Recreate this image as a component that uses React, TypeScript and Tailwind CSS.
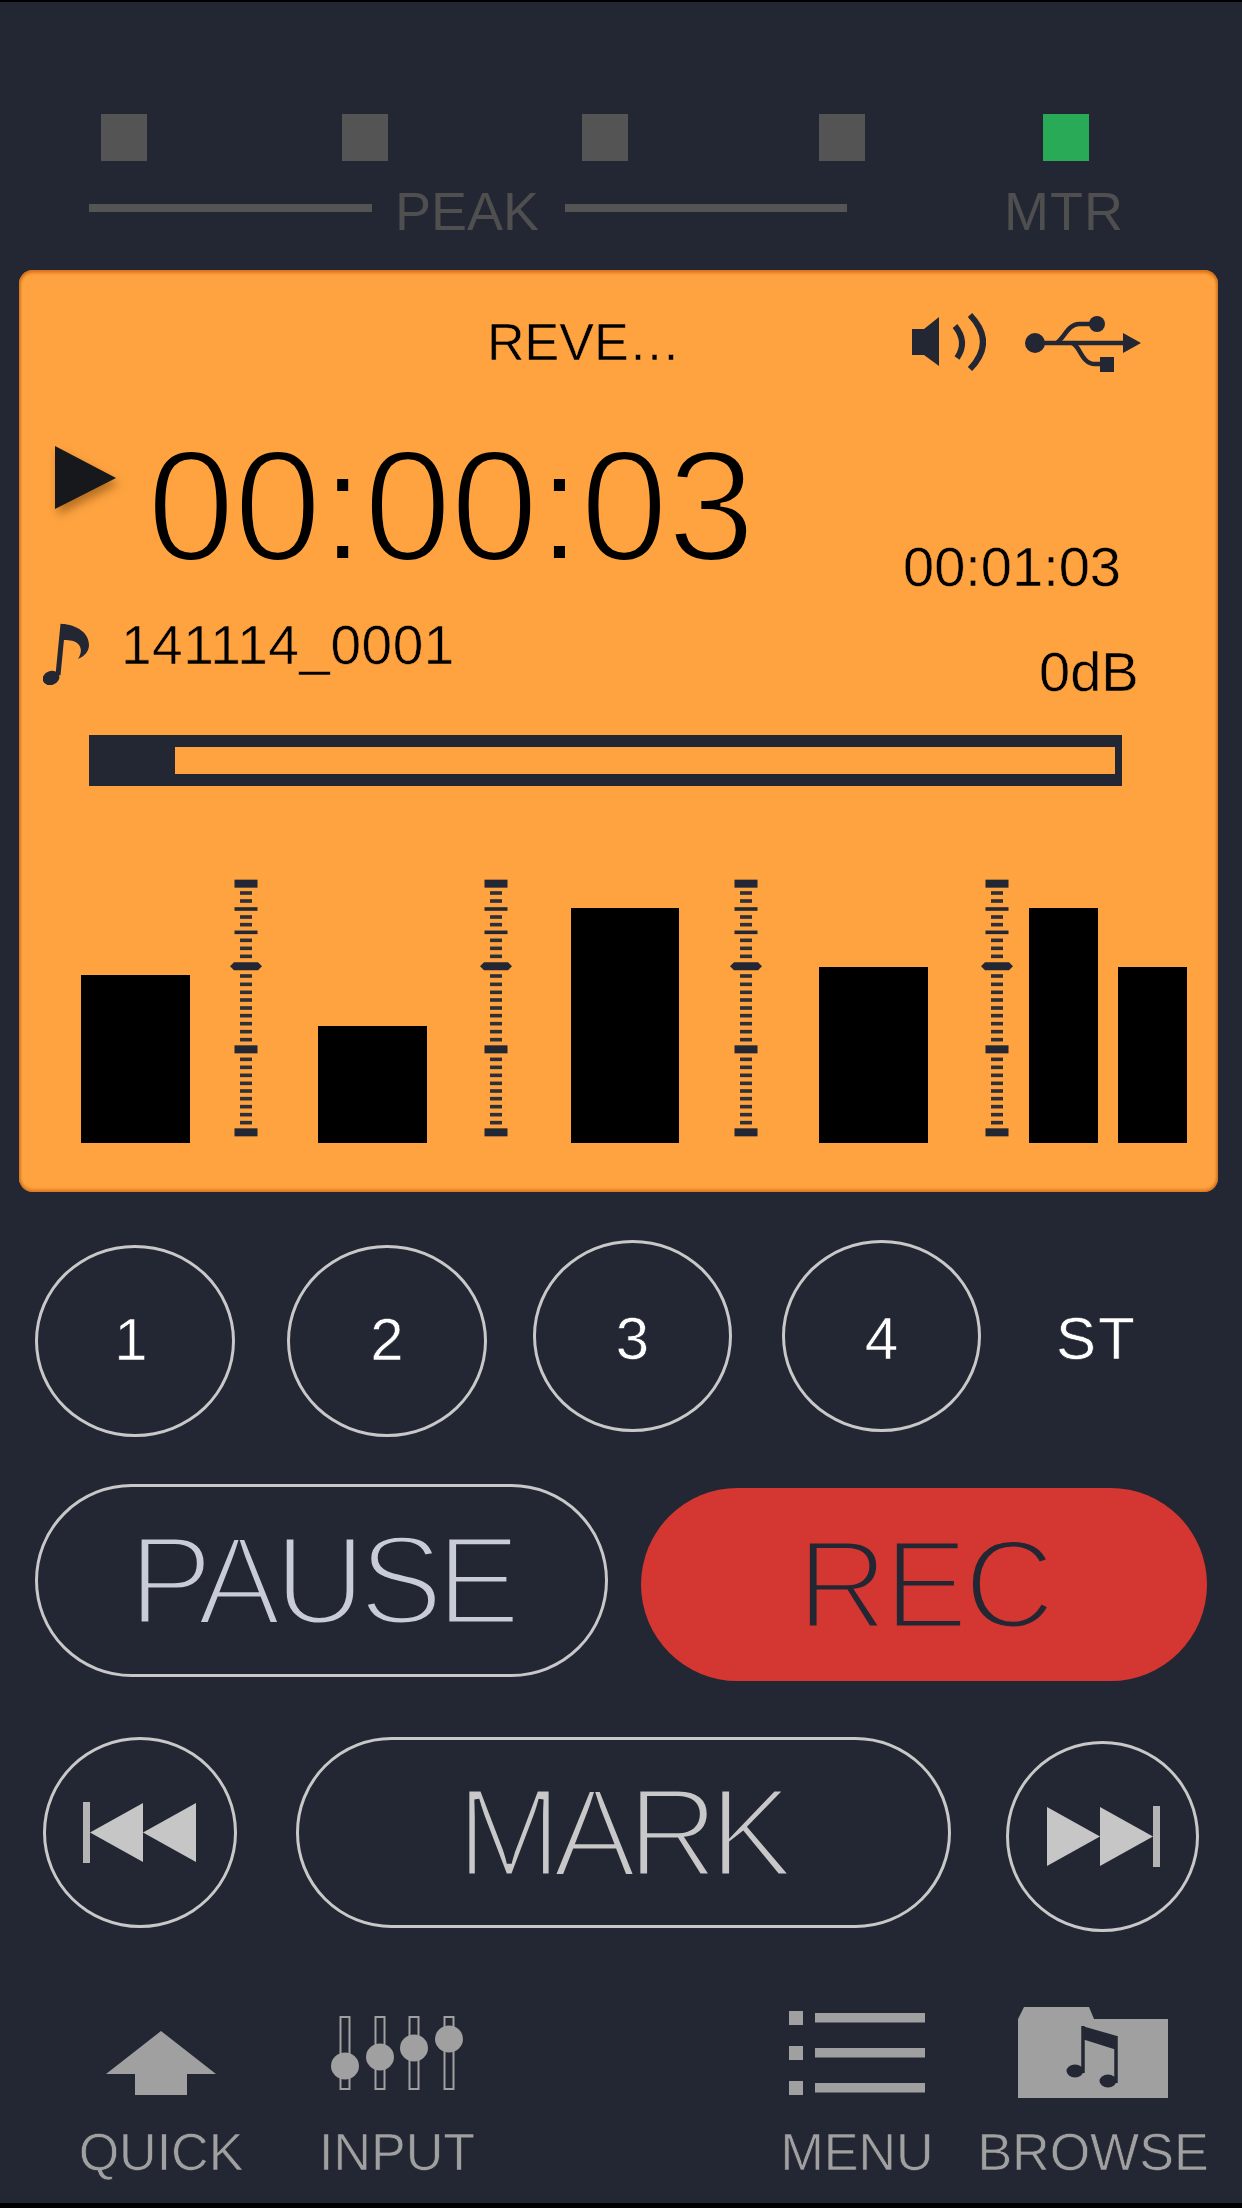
const DARK = "#232633";
const SANS = "font-['Liberation_Sans',sans-serif]";

function Scale() {
  const small = [104, 128, 176, 199, 246, 270, 294, 353, 378, 402, 425, 449, 472, 496, 520, 544, 603, 627, 651, 675, 698, 721, 745, 769, 793];
  const medium = [152, 222];
  const big = [76, 573, 822];
  const y = (v: number) => v / 3 - 62 / 3;
  return (
    <svg width="32" height="262" viewBox="0 0 32 262" className="shrink-0 blur-[0.5px]">
      {big.map((v) => (
        <rect key={v} x="4.5" y={y(v) - 4} width="23" height="8" fill={DARK} />
      ))}
      {medium.map((v) => (
        <rect key={v} x="4.5" y={y(v) - 1.8} width="23" height="3.6" fill={DARK} />
      ))}
      {small.map((v) => (
        <rect key={v} x="10" y={y(v) - 1.8} width="12" height="3.6" fill="#2f2f35" />
      ))}
      <polygon points={`0,${y(324)} 4,${y(324) - 4} 28,${y(324) - 4} 32,${y(324)} 28,${y(324) + 4} 4,${y(324) + 4}`} fill={DARK} />
    </svg>
  );
}

function Speaker() {
  return (
    <svg width="74" height="60" viewBox="0 0 74 60" className="shrink-0">
      <polygon points="0,17 12,17 27,5 27,54 12,43 0,43" fill={DARK} />
      <path d="M43,14 Q56,30 45,46" fill="none" stroke={DARK} strokeWidth="6" />
      <path d="M58,3 Q84,30 58,57" fill="none" stroke={DARK} strokeWidth="6" />
    </svg>
  );
}

function Usb() {
  return (
    <svg width="116" height="56" viewBox="0 0 116 56" className="shrink-0">
      <circle cx="10" cy="27" r="10" fill={DARK} />
      <path d="M10,27 L100,27" stroke={DARK} strokeWidth="4.5" />
      <polygon points="98,17 116,27 98,37" fill={DARK} />
      <path d="M32,27 C40,20 44,8 54,8 L72,8" fill="none" stroke={DARK} strokeWidth="4.5" />
      <circle cx="72" cy="8" r="8" fill={DARK} />
      <path d="M47,27 C55,29 56,48 70,48 L78,48" fill="none" stroke={DARK} strokeWidth="4.5" />
      <rect x="75" y="41" width="14" height="15" fill={DARK} />
    </svg>
  );
}

function Note() {
  return (
    <svg width="46" height="62" viewBox="0 0 46 62" className="shrink-0">
      <path d="M20,1 L15,52" stroke={DARK} strokeWidth="5" fill="none" />
      <ellipse cx="8" cy="55" rx="8.5" ry="7" fill={DARK} transform="rotate(-20 8 55)" />
      <path d="M20,1 C34,2 46,10 46,22 C46,28 42,33 35,36 C39,30 39,24 34,20 C30,17 25,17 19,17 Z" fill={DARK} />
    </svg>
  );
}

function Circle({ label, className }: { label: string; className: string }) {
  return (
    <div className={`h-[192px] shrink-0 rounded-[50%] border-[3px] border-[#c8c8c8] flex items-center justify-center text-white text-[60px] [-webkit-text-stroke:0.6px_#232633] ${className}`}>
      {label}
    </div>
  );
}

function SkipIcon({ flip }: { flip?: boolean }) {
  return (
    <svg width="114" height="62" viewBox="0 0 114 62" className={flip ? "-scale-x-100" : ""}>
      <rect x="0" y="0" width="7" height="61" fill="#b4b4b4" />
      <polygon points="7,30.5 60,1 60,60" fill="#c6c6c6" />
      <polygon points="60,30.5 113,1 113,60" fill="#c6c6c6" />
    </svg>
  );
}

function Led({ className, color = "bg-[#545454]" }: { className: string; color?: string }) {
  return <div className={`w-[46px] h-[47px] shrink-0 ${color} ${className}`} />;
}

function NavLabel({ children }: { children: string }) {
  return <div className="mt-[24px] text-[52px] leading-[50px] text-[#a0a0a0] whitespace-nowrap [-webkit-text-stroke:0.7px_#232633]">{children}</div>;
}

export default function App() {
  return (
    <div className={`w-[1242px] h-[2208px] bg-[#232633] overflow-hidden flex flex-col border-t-2 border-b-[5px] border-t-black border-b-black ${SANS}`}>
      {/* LEDs */}
      <div className="flex mt-[112px] h-[47px]">
        <Led className="ml-[101px]" />
        <Led className="ml-[195px]" />
        <Led className="ml-[194px]" />
        <Led className="ml-[191px]" />
        <Led className="ml-[178px]" color="bg-[#28aa57]" />
      </div>
      {/* PEAK / MTR */}
      <div className="flex items-center h-[42px] mt-[29px] text-[#4f4f4f] text-[54px] leading-[42px]">
        <div className="ml-[89px] w-[283px] h-[8px] mb-[6px] bg-[#545454]" />
        <div className="ml-[23px] w-[170px]">PEAK</div>
        <div className="w-[282px] h-[8px] mb-[6px] bg-[#545454]" />
        <div className="ml-[157px] tracking-[1px]">MTR</div>
      </div>
      {/* Display */}
      <div className="ml-[19px] mt-[38px] w-[1199px] h-[922px] shrink-0 rounded-[14px] bg-[#ffa340] shadow-[inset_0_3px_3px_rgba(214,104,20,0.75),inset_0_-3px_3px_rgba(214,104,20,0.55),inset_2px_0_2px_rgba(180,110,40,0.5),inset_-2px_0_2px_rgba(180,110,40,0.5)] text-black flex flex-col">
        <div className="flex items-start h-[60px] mt-[42px]">
          <div className="ml-[468px] w-[425px] text-[52px] leading-[60px] [-webkit-text-stroke:0.5px_#ffa340]">REVE…</div>
          <Speaker />
          <div className="ml-[39px] mt-[4px]">
            <Usb />
          </div>
        </div>
        <div className="flex h-[160px] mt-[70px]">
          <div className="ml-[36px] mt-[4px] w-[61px] h-[63px] shrink-0 drop-shadow-[3px_6px_5px_rgba(120,70,10,0.55)]">
            <svg width="61" height="63" viewBox="0 0 61 63">
              <polygon points="0,0 61,32 0,63" fill="#16181c" />
            </svg>
          </div>
          <div className="ml-[31px] w-[613px] text-[158px] leading-[126px] tracking-[-1px] whitespace-nowrap [-webkit-text-stroke:4px_#ffa340]">00:00:03</div>
          <div className="ml-[143px] mt-[100px] text-[56px] leading-[50px] whitespace-nowrap [-webkit-text-stroke:0.5px_#ffa340]">00:01:03</div>
        </div>
        <div className="flex h-[64px] mt-[21px]">
          <div className="ml-[24px]">
            <Note />
          </div>
          <div className="ml-[32px] w-[918px] text-[55px] leading-[44px] tracking-[0.5px] whitespace-nowrap [-webkit-text-stroke:0.6px_#ffa340]">141114_0001</div>
          <div className="mt-[24px] text-[56px] leading-[50px] whitespace-nowrap [-webkit-text-stroke:0.5px_#ffa340]">0dB</div>
        </div>
        <div className="ml-[70px] mt-[48px] w-[1033px] h-[51px] bg-[#232633] pl-[86px] pr-[7px] py-[12px]">
          <div className="h-full bg-[#ffa340]" />
        </div>
        <div className="flex items-end h-[262px] mt-[95px]">
          <div className="ml-[62px] w-[109px] h-[168px] bg-black shrink-0" />
          <div className="ml-[40px] mb-[2px]"><Scale /></div>
          <div className="ml-[56px] w-[109px] h-[117px] bg-black shrink-0" />
          <div className="ml-[53px] mb-[2px]"><Scale /></div>
          <div className="ml-[59px] w-[108px] h-[235px] bg-black shrink-0" />
          <div className="ml-[51px] mb-[2px]"><Scale /></div>
          <div className="ml-[57px] w-[109px] h-[176px] bg-black shrink-0" />
          <div className="ml-[53px] mb-[2px]"><Scale /></div>
          <div className="ml-[16px] w-[69px] h-[235px] bg-black shrink-0" />
          <div className="ml-[20px] w-[69px] h-[176px] bg-black shrink-0" />
        </div>
      </div>
      {/* Channels */}
      <div className="flex items-start h-[196px] mt-[48px]">
        <Circle label="1" className="w-[200px] ml-[35px] mt-[5px] pr-[8px] pb-[2px]" />
        <Circle label="2" className="w-[200px] ml-[52px] mt-[5px] pb-[2px]" />
        <Circle label="3" className="w-[199px] ml-[46px] pt-[6px]" />
        <Circle label="4" className="w-[199px] ml-[50px] pt-[6px]" />
        <div className="ml-[75px] mt-[74px] text-white text-[60px] leading-[50px] tracking-[2px] [-webkit-text-stroke:0.6px_#232633]">ST</div>
      </div>
      {/* PAUSE / REC */}
      <div className="flex items-start h-[197px] mt-[48px]">
        <div className="ml-[35px] w-[573px] h-[193px] rounded-[97px] border-[3px] border-[#c8c8c8] flex items-center justify-center text-[#c9ccd6] text-[126px] tracking-[-6.5px] [-webkit-text-stroke:5px_#232633]">PAUSE</div>
        <div className="ml-[33px] mt-[4px] w-[566px] h-[193px] rounded-[97px] bg-[#d43732] flex items-center justify-center text-[#232633] text-[126px] tracking-[-4px] [-webkit-text-stroke:5px_#d43732]">REC</div>
      </div>
      {/* Transport */}
      <div className="flex items-start h-[195px] mt-[56px]">
        <div className="ml-[43px] w-[194px] h-[191px] rounded-[50%] border-[3px] border-[#c8c8c8] flex items-center justify-center">
          <SkipIcon />
        </div>
        <div className="ml-[59px] w-[655px] h-[191px] rounded-[96px] border-[3px] border-[#c8c8c8] flex items-center justify-center text-[#c8c8c8] text-[126px] tracking-[-9px] pr-[6px] [-webkit-text-stroke:5px_#232633]">MARK</div>
        <div className="ml-[55px] mt-[4px] w-[193px] h-[191px] rounded-[50%] border-[3px] border-[#c8c8c8] flex items-center justify-center">
          <SkipIcon flip />
        </div>
      </div>
      {/* Footer */}
      <div className="flex items-start mt-[75px]">
        <div className="ml-[61px] w-[200px] flex flex-col items-center">
          <svg width="110" height="96" viewBox="0 0 110 96">
            <polygon points="55,24 110,67 81,67 81,88 29,88 29,67 0,67" fill="#a0a0a0" />
          </svg>
          <NavLabel>QUICK</NavLabel>
        </div>
        <div className="ml-[36px] w-[200px] flex flex-col items-center">
          <svg width="136" height="96" viewBox="0 0 136 96">
            {[
              [16, 59],
              [51, 50],
              [85, 41],
              [120, 32],
            ].map(([x, y]) => (
              <g key={x}>
                <rect x={x - 4.5} y="10" width="9" height="72" fill="none" stroke="#a0a0a0" strokeWidth="2" />
                <ellipse cx={x} cy={y} rx="14" ry="13.5" fill="#a0a0a0" />
              </g>
            ))}
          </svg>
          <NavLabel>INPUT</NavLabel>
        </div>
        <div className="ml-[260px] w-[200px] flex flex-col items-center">
          <svg width="136" height="96" viewBox="0 0 136 96">
            {[4, 39, 74].map((y) => (
              <g key={y}>
                <rect x="0" y={y} width="14" height="14" fill="#a0a0a0" />
                <rect x="26" y={y + 2} width="110" height="9.5" fill="#a0a0a0" />
              </g>
            ))}
          </svg>
          <NavLabel>MENU</NavLabel>
        </div>
        <div className="ml-[21px] w-[230px] flex flex-col items-center">
          <svg width="150" height="96" viewBox="0 0 150 96">
            <polygon points="0,12 6,0 71,0 76,12 150,12 150,91 0,91" fill="#a0a0a0" />
            <path d="M65,19 L65,66" fill="none" stroke={DARK} strokeWidth="3.5" />
            <path d="M98,29 L98,76" fill="none" stroke={DARK} strokeWidth="3.5" />
            <polygon points="64,19 99,29 99,43 64,32" fill={DARK} />
            <ellipse cx="57" cy="64" rx="8.5" ry="6.5" fill={DARK} />
            <ellipse cx="90" cy="74" rx="8.5" ry="6.5" fill={DARK} />
          </svg>
          <NavLabel>BROWSE</NavLabel>
        </div>
      </div>
    </div>
  );
}
